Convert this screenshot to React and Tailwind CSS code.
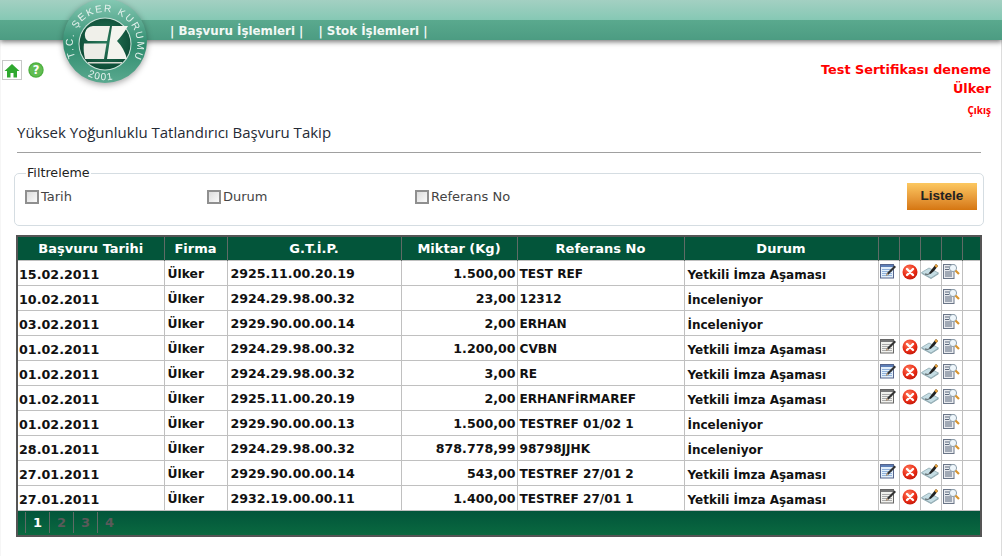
const rows = [
  { date: '15.02.2011', gtip: '2925.11.00.20.19', qty: '1.500,00', ref: 'TEST REF', status: 'Yetkili İmza Aşaması', edit: 'blue' },
  { date: '10.02.2011', gtip: '2924.29.98.00.32', qty: '23,00', ref: '12312', status: 'İnceleniyor' },
  { date: '03.02.2011', gtip: '2929.90.00.00.14', qty: '2,00', ref: 'ERHAN', status: 'İnceleniyor' },
  { date: '01.02.2011', gtip: '2924.29.98.00.32', qty: '1.200,00', ref: 'CVBN', status: 'Yetkili İmza Aşaması', edit: 'gray' },
  { date: '01.02.2011', gtip: '2924.29.98.00.32', qty: '3,00', ref: 'RE', status: 'Yetkili İmza Aşaması', edit: 'blue' },
  { date: '01.02.2011', gtip: '2925.11.00.20.19', qty: '2,00', ref: 'ERHANFİRMAREF', status: 'Yetkili İmza Aşaması', edit: 'gray' },
  { date: '01.02.2011', gtip: '2929.90.00.00.13', qty: '1.500,00', ref: 'TESTREF 01/02 1', status: 'İnceleniyor' },
  { date: '28.01.2011', gtip: '2924.29.98.00.32', qty: '878.778,99', ref: '98798JJHK', status: 'İnceleniyor' },
  { date: '27.01.2011', gtip: '2929.90.00.00.14', qty: '543,00', ref: 'TESTREF 27/01 2', status: 'Yetkili İmza Aşaması', edit: 'blue' },
  { date: '27.01.2011', gtip: '2932.19.00.00.11', qty: '1.400,00', ref: 'TESTREF 27/01 1', status: 'Yetkili İmza Aşaması', edit: 'gray' },
];

const headers = ['Başvuru Tarihi', 'Firma', 'G.T.İ.P.', 'Miktar (Kg)', 'Referans No', 'Durum', '', '', '', '', ''];
const widths = ['w-[147px]', 'w-[63px]', 'w-[174px]', 'w-[116px]', 'w-[167px]', 'w-[194px]', 'w-[21px]', 'w-[21px]', 'w-[21px]', 'w-[21px]', 'w-[19px]'];

const Logo = () => (
  <svg viewBox="60 0 92 90" className="absolute left-[60px] top-0 w-[92px] h-[90px] drop-shadow-[0_2px_3px_rgba(0,0,0,0.35)]">
    <defs>
      <linearGradient id="ring" x1="0" y1="0" x2="0" y2="1">
        <stop offset="0" stopColor="#86c9b4" />
        <stop offset="0.55" stopColor="#2f8c6e" />
        <stop offset="1" stopColor="#5aa98f" />
      </linearGradient>
      <radialGradient id="core" cx="0.5" cy="0.45" r="0.55">
        <stop offset="0" stopColor="#2a7a5c" />
        <stop offset="1" stopColor="#0d4c36" />
      </radialGradient>
      <path id="arcTop" d="M 75.5 57 A 32.2 32.2 0 1 1 134.5 57" fill="none" />
      <path id="arcBottom" d="M 84 74 A 39 39 0 0 0 126 74" fill="none" />
    </defs>
    <circle cx="105" cy="41" r="42" fill="url(#ring)" />
    <circle cx="105" cy="44" r="26.5" fill="#cfe5dc" />
    <circle cx="105" cy="44" r="25.5" fill="url(#core)" />
    <text fontFamily="'Liberation Sans', sans-serif" fontSize="10" fill="#e6f2ee" letterSpacing="1.7">
      <textPath href="#arcTop">T.C. ŞEKER KURUMU</textPath>
    </text>
    <text fontFamily="'Liberation Sans', sans-serif" fontSize="10" fill="#e6f2ee" letterSpacing="1.2">
      <textPath href="#arcBottom" startOffset="4">2001</textPath>
    </text>
    <path d="M93 26 H110 L107 41 H88 Q84 38 85 33 Q86 27 93 26 Z" fill="#f0f0ea" />
    <path d="M84 43.5 H106.5 L104 59 H85 Q83 50 84 43.5 Z" fill="#ecece6" />
    <path d="M112 26 H128 Q122 36 117 41 Q124 48 127 59 H107 Z" fill="#f4f4ee" />
    <path d="M88 62 H122 V63.5 H88 Z" fill="#d8d8d0" />
  </svg>
);

const HomeIcon = () => (
  <svg viewBox="0 0 16 15" className="w-[16px] h-[15px]">
    <path d="M8 1 L0.5 8 H3 V14.5 H6.5 V10 H9.5 V14.5 H13 V8 H15.5 Z" fill="#2fa82f" />
  </svg>
);

const HelpIcon = () => (
  <svg viewBox="0 0 16 16" className="w-[16px] h-[16px]">
    <circle cx="8" cy="8" r="7.7" fill="#4caf3f" />
    <circle cx="8" cy="8" r="6.5" fill="#62bd52" />
    <text x="8" y="12.2" textAnchor="middle" fontSize="11.5" fontWeight="700" fill="#fff" fontFamily="'DejaVu Sans', sans-serif">?</text>
  </svg>
);

const EditIcon = ({ tone }) => (
  <svg viewBox="0 0 17 16" className="w-[17px] h-[16px]">
    <rect x="0.5" y="1.5" width="13" height="13.5" fill={tone === 'blue' ? '#e3effa' : '#f2f2ee'} stroke={tone === 'blue' ? '#55648c' : '#666'} />
    <rect x="1" y="2" width="12" height="2" fill={tone === 'blue' ? '#5d7fb8' : '#777'} />
    <path d="M2 6.5 H12 M2 8.5 H12 M2 10.5 H12 M2 12.5 H12" stroke={tone === 'blue' ? '#8fb1dc' : '#aaa'} strokeWidth="1" />
    <path d="M6 13 L7 10 L14.5 2.5 L16 4 L8.5 11.5 Z" fill="#333" />
    <path d="M6 13 L7 10 L8.5 11.5 Z" fill="#d9b48a" />
  </svg>
);

const DeleteIcon = () => (
  <svg viewBox="0 0 16 16" className="w-[16px] h-[16px]">
    <defs>
      <radialGradient id="red" cx="0.4" cy="0.3" r="0.8">
        <stop offset="0" stopColor="#ff7a5c" />
        <stop offset="0.6" stopColor="#e82a14" />
        <stop offset="1" stopColor="#b81408" />
      </radialGradient>
    </defs>
    <circle cx="8" cy="8" r="7.5" fill="url(#red)" />
    <path d="M5 5 L11 11 M11 5 L5 11" stroke="#fff" strokeWidth="2.4" strokeLinecap="round" />
  </svg>
);

const SignIcon = () => (
  <svg viewBox="0 0 19 16" className="w-[19px] h-[16px]">
    <path d="M0.5 9.5 L8 5 L17.5 10 L10 15 Z" fill="#c5dde4" stroke="#8fa9b1" strokeWidth="0.8" />
    <path d="M10 15 L17.5 10 V11.2 L10 16 L0.5 10.8 V9.5 Z" fill="#8fa9b1" />
    <path d="M8 10 L11 6 L15 1 L17 3 L13 8 L9.5 11 Z" fill="#222" />
    <path d="M13.5 3 L15 1 L17 3 L15.5 5 Z" fill="#e9a23b" />
    <path d="M4 11 Q7 12 9 10.5" stroke="#333" strokeWidth="0.8" fill="none" />
  </svg>
);

const ViewIcon = () => (
  <svg viewBox="0 0 17 16" className="w-[17px] h-[16px]">
    <rect x="0.5" y="1.5" width="10.5" height="14" fill="#e8eaee" stroke="#6b7688" />
    <path d="M2 4 H7 M2 6.5 H6 M2 9 H9 M2 11 H9 M2 13 H9" stroke="#5d6a7e" strokeWidth="1" />
    <circle cx="10" cy="5" r="3.6" fill="#eef6fb" stroke="#8ea0ad" />
    <path d="M12.5 7.5 L16 11" stroke="#d9952f" strokeWidth="2.2" />
  </svg>
);

const Check = ({ label, className }) => (
  <label className={`flex items-center gap-[2px] ${className}`}>
    <span className="block w-[14px] h-[14px] border-2 border-[#8f8f8f] bg-gradient-to-br from-[#dcdcdc] to-[#fafafa]" />
    <span>{label}</span>
  </label>
);

export default function App() {
  return (
    <div className="relative h-[556px] w-[1002px] overflow-hidden bg-white font-['DejaVu_Sans',sans-serif]">
      <header className="relative h-[40px] bg-[linear-gradient(#a3d0c2_0px,#85c8b4_20px,#5aa98e_20px,#4c9c82_40px)] shadow-[0_2px_5px_rgba(50,50,50,0.65)]">
        <nav className="flex pl-[170px] pt-[23px] text-[11.85px] leading-[16px] font-bold text-[#f2f8f5]">
          <span className="whitespace-pre">| Başvuru İşlemleri |</span>
          <span className="ml-[15px] whitespace-pre">| Stok İşlemleri |</span>
        </nav>
      </header>
      <Logo />

      <div className="h-[516px] border-x border-r-[#dcdcdc] border-l-[#f6f6f6]">
        <div className="flex justify-between pl-[1px] pr-[10px]">
          <div className="flex items-start gap-[6px] pt-[20px]">
            <span className="flex w-[20px] h-[20px] items-center justify-center border border-[#c8c8c8]">
              <HomeIcon />
            </span>
            <span className="mt-[2px]"><HelpIcon /></span>
          </div>
          <div className="pt-[20px] text-right font-bold text-[#ff0000]">
            <div className="text-[12.85px] leading-[19px]">Test Sertifikası deneme</div>
            <div className="text-[12.85px] leading-[19px]">Ülker</div>
            <div className="mt-[5px] text-[10px] leading-[14px] font-['Noto_Sans',sans-serif]">Çıkış</div>
          </div>
        </div>

        <main className="pl-[16px] pr-[20px]">
          <h1 className="mt-[5px] text-[15px] leading-[20px] font-normal text-[#252a35] font-['Open_Sans',sans-serif]">
            Yüksek Yoğunluklu Tatlandırıcı Başvuru Takip
          </h1>
          <hr className="mt-[10px] border-0 h-[1px] bg-[#a0a0a0]" />

          <fieldset className="mx-[-3px] mt-[13px] h-[60px] rounded-[5px] border border-[#d5dde2] pl-[10px] pr-[5px]">
            <legend className="ml-[1px] px-[1px] text-[12.7px] leading-[14px] text-[#222]">Filtreleme</legend>
            <div className="flex items-start text-[13px] text-[#444]">
              <Check label="Tarih" className="w-[182px] pt-[7px]" />
              <Check label="Durum" className="w-[208px] pt-[7px]" />
              <Check label="Referans No" className="pt-[7px]" />
              <button className="ml-auto mr-[1px] mt-[3px] h-[27px] w-[70px] bg-gradient-to-b from-[#fcc860] to-[#d5760f] text-[13.5px] font-bold text-[#222] font-['Liberation_Sans',sans-serif]">
                Listele
              </button>
            </div>
          </fieldset>

          <table className="ml-[-1px] mt-[9px] w-[964px] table-fixed border-collapse text-[12.7px] text-[#111] border-2 border-[#555]">
            <thead>
              <tr className="h-[24px] bg-[#03553a] text-[13px] text-white">
                {headers.map((h, i) => (
                  <th key={i} className={`${widths[i]} border-x border-[#5f6b66] p-0 text-center font-bold`}>{h}</th>
                ))}
              </tr>
            </thead>
            <tbody>
              {rows.map((r, i) => (
                <tr key={i} className="h-[25px] font-bold">
                  <td className="border border-[#c0c0c0] p-0 pl-[1px] pt-[4px]">{r.date}</td>
                  <td className="border border-[#c0c0c0] p-0 pl-[3px] pt-[4px] text-[12.3px]">Ülker</td>
                  <td className="border border-[#c0c0c0] p-0 pl-[3px] pt-[4px] text-[12.6px]">{r.gtip}</td>
                  <td className="border border-[#c0c0c0] p-0 pr-[1px] pt-[4px] text-right text-[12.6px]">{r.qty}</td>
                  <td className="border border-[#c0c0c0] p-0 pl-[2px] pt-[4px] whitespace-nowrap text-[12.1px]">{r.ref}</td>
                  <td className="border border-[#c0c0c0] p-0 pl-[3px] pt-[4px] text-[12px]">{r.status}</td>
                  <td className="border border-[#c0c0c0] p-0"><div className="flex justify-center pb-[3px]">{r.edit && <EditIcon tone={r.edit} />}</div></td>
                  <td className="border border-[#c0c0c0] p-0"><div className="flex justify-center pb-[2px]">{r.edit && <DeleteIcon />}</div></td>
                  <td className="border border-[#c0c0c0] p-0"><div className="flex justify-center pb-[3px]">{r.edit && <SignIcon />}</div></td>
                  <td className="border border-[#c0c0c0] p-0"><div className="flex justify-center pb-[3px]"><ViewIcon /></div></td>
                  <td className="border border-[#c0c0c0] p-0" />
                </tr>
              ))}
            </tbody>
            <tfoot>
              <tr className="h-[26px] bg-gradient-to-b from-[#02543a] to-[#0b6a40]">
                <td colSpan={11} className="p-0">
                  <div className="flex pl-[7px] text-[13px] font-bold text-[#5a5a5a]">
                    {['1', '2', '3', '4'].map((p, i) => (
                      <span key={p} className={`w-[24px] border-l border-[#5f6b66] pl-[7px] leading-[21px] ${i === 0 ? 'text-white' : ''}`}>{p}</span>
                    ))}
                  </div>
                </td>
              </tr>
            </tfoot>
          </table>
        </main>
      </div>
    </div>
  );
}
